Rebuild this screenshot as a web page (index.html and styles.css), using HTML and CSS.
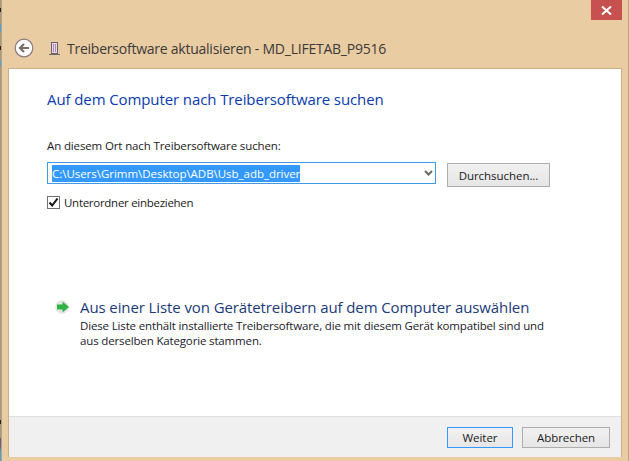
FILE: index.html
```html
<!DOCTYPE html>
<html lang="de">
<head>
<meta charset="utf-8">
<title>Treibersoftware aktualisieren</title>
<link rel="stylesheet" href="styles.css">
</head>
<body>
<div class="window">
  <div class="caption">
    <div class="close">
      <svg width="11" height="9" viewBox="0 0 11 9"><path d="M1 0.5 L10 8.5 M10 0.5 L1 8.5" stroke="#fff" stroke-width="2" fill="none"/></svg>
    </div>
  </div>
  <div class="titlebar">
    <svg class="back" width="20" height="20" viewBox="0 0 20 20">
      <circle cx="10" cy="10" r="8.8" fill="#fdfcfa" stroke="#8a7a80" stroke-width="1.2"/>
      <path d="M15 10 H6.5 M10 6 L6 10 L10 14" stroke="#77706a" stroke-width="2.2" fill="none"/>
    </svg>
    <svg class="device" width="11" height="15" viewBox="0 0 11 15">
      <rect x="2.5" y="1.5" width="6" height="11" fill="#e9dbe6" stroke="#6f5f70"/>
      <rect x="4" y="3" width="1" height="8" fill="#a78ab8"/>
      <rect x="6" y="3" width="1" height="8" fill="#a78ab8"/>
      <rect x="0" y="13" width="11" height="1" fill="#6f6a60"/>
    </svg>
    <span class="wintitle">Treibersoftware aktualisieren - MD_LIFETAB_P9516</span>
  </div>
  <div class="panel">
    <div class="content">
      <h1 class="heading">Auf dem Computer nach Treibersoftware suchen</h1>
      <div class="label">An diesem Ort nach Treibersoftware suchen:</div>
      <div class="pathrow">
        <div class="combo">
          <span class="selected">C:\Users\Grimm\Desktop\ADB\Usb_adb_driver</span>
          <svg class="chev" width="9" height="6" viewBox="0 0 9 6"><path d="M1 1 L4.5 4.5 L8 1" stroke="#6f6a60" stroke-width="2" fill="none"/></svg>
        </div>
        <div class="btn browse">Durchsuchen...</div>
      </div>
      <div class="check">
        <div class="box">
          <svg width="11" height="11" viewBox="0 0 11 11"><path d="M1.5 5.5 L4.2 8.5 L9.5 1.5" stroke="#111" stroke-width="2" fill="none"/></svg>
        </div>
        <span>Unterordner einbeziehen</span>
      </div>
      <div class="option">
        <svg class="arrow" width="15" height="14" viewBox="0 0 15 14">
          <circle cx="7" cy="7" r="6.8" fill="#e6e6e6"/>
          <path d="M2 4.5 H7.5 V1.5 L14 7 L7.5 12.5 V9.5 H2 Z" fill="#2fb344"/>
        </svg>
        <div class="optiontext">
          <div class="optiontitle">Aus einer Liste von Gerätetreibern auf dem Computer auswählen</div>
          <div class="optiondesc">Diese Liste enthält installierte Treibersoftware, die mit diesem Gerät kompatibel sind und aus derselben Kategorie stammen.</div>
        </div>
      </div>
    </div>
    <div class="footer">
      <div class="btn next">Weiter</div>
      <div class="btn cancel">Abbrechen</div>
    </div>
  </div>
</div>
</body>
</html>
```
FILE: styles.css
```css
html, body {
  margin: 0;
  padding: 0;
  height: 100%;
  overflow: hidden;
}
body {
  background: linear-gradient(#a89a80 0 8px, #222 8px 12px, #a89a80 12px 24px, #4aa3df 24px 32px, #a89a80 32px 46px, #222 46px 50px, #a89a80 50px 60px, #4aa3df 60px 66px, #a89a80 66px 420px, #222 420px 424px, #a89a80 424px 438px, #6a5a7a 438px 446px, #4aa3df 452px 461px);
  font-family: "Open Sans", "Noto Sans", sans-serif;
  font-size: 11.5px;
  color: #1a1a1a;
}
.window {
  box-sizing: border-box;
  width: 628px;
  height: 461px;
  margin-left: 1px;
  padding: 0 6px 4px 6px;
  background: #eacca2;
  border-left: 1px solid #b8a27f;
  border-right: 1px solid #b8a27f;
  display: flex;
  flex-direction: column;
}
.caption {
  height: 20px;
  display: flex;
  justify-content: flex-end;
}
.close {
  width: 31px;
  height: 20px;
  background: #c75050;
  display: flex;
  align-items: center;
  justify-content: center;
}
.titlebar {
  box-sizing: border-box;
  height: 48px;
  display: flex;
  align-items: center;
  padding: 8px 0 0 6px;
}
.back { margin-right: 15px; }
.device { margin-right: 7px; }
.wintitle {
  font-size: 14px;
  color: #3a3a3a;
  letter-spacing: -0.24px;
}
.panel {
  flex: 1;
  background: #fff;
  border-top: 1px solid #c9b08a;
  border-right: 1px solid #c9b08a;
  border-left: 1px solid #c9b08a;
  display: flex;
  flex-direction: column;
}
.content {
  flex: 1;
  padding: 20px 0 0 38px;
}
.heading {
  margin: 0;
  font-size: 15px;
  line-height: 20px;
  font-weight: 400;
  color: #0a3bb0;
  letter-spacing: -0.1px;
}
.label {
  margin-top: 29px;
  line-height: 16px;
  letter-spacing: -0.13px;
}
.pathrow {
  margin-top: 8px;
  display: flex;
  align-items: flex-start;
}
.combo {
  box-sizing: border-box;
  width: 389px;
  height: 22px;
  border: 1px solid #3f9ae8;
  display: flex;
  align-items: center;
  justify-content: space-between;
  padding: 0 2px 0 4px;
}
.selected {
  background: #3399ff;
  color: #fff;
  line-height: 17px;
  letter-spacing: -0.03px;
}
.btn {
  box-sizing: border-box;
  height: 21px;
  display: flex;
  align-items: center;
  justify-content: center;
  background: linear-gradient(#f1f1f1, #e6e6e6);
  border: 1px solid #adadad;
  letter-spacing: -0.05px;
}
.browse {
  width: 103px;
  height: 24px;
  margin-top: 1px;
  margin-left: 11px;
}
.check {
  margin-top: 8px;
  display: flex;
  align-items: center;
  letter-spacing: -0.28px;
}
.box {
  box-sizing: border-box;
  width: 13px;
  height: 13px;
  border: 1px solid #707070;
  margin-right: 4px;
  display: flex;
  align-items: center;
  justify-content: center;
}
.option {
  margin-top: 87px;
  display: flex;
  align-items: flex-start;
  margin-left: 8px;
}
.arrow {
  margin-top: 3px;
  margin-right: 10px;
}
.optiontext {
  width: 480px;
}
.optiontitle {
  font-size: 15px;
  line-height: 20px;
  color: #1c3a7a;
  letter-spacing: -0.1px;
}
.optiondesc {
  margin-top: 2px;
  line-height: 14.5px;
  letter-spacing: -0.15px;
  color: #1a1a2a;
}
.footer {
  box-sizing: border-box;
  height: 41px;
  background: #f0f0f0;
  border-top: 1px solid #dfdfdf;
  display: flex;
  justify-content: flex-end;
  align-items: center;
  padding-right: 11px;
  gap: 9px;
}
.next {
  width: 66px;
  border-color: #3399ff;
}
.cancel {
  width: 88px;
}
```
